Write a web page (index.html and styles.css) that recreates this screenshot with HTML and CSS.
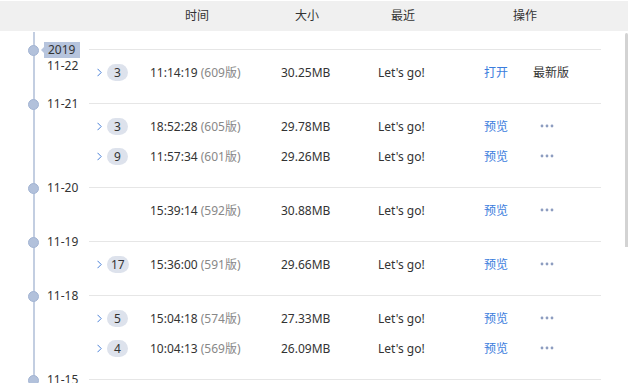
FILE: index.html
```html
<!DOCTYPE html>
<html lang="zh-CN">
<head>
  <meta charset="UTF-8">
  <meta name="viewport" content="width=device-width, initial-scale=1.0">
  <title>历史版本</title>
  <link rel="stylesheet" href="styles.css">
</head>
<body>
  <div class="panel">
    <div class="head">
      <span></span>
      <span>时间</span>
      <span>大小</span>
      <span>最近</span>
      <span>操作</span>
    </div>

    <div class="list">
      <div class="scroll-thumb"></div>

      <div class="group">
        <span class="dot"></span>
        <div class="date">
          <span class="year">2019</span>
          <span>11-22</span>
        </div>
        <div class="rows">
          <div class="row">
            <div class="expand"><svg class="chev" width="5" height="9" viewBox="0 0 5 9"><path d="M0.5 0.8 L4.2 4.5 L0.5 8.2" fill="none" stroke="#4a80d8" stroke-width="1"/></svg><span class="badge">3</span></div>
            <div>11:14:19 <span class="ver">(609版)</span></div>
            <div>30.25MB</div>
            <div>Let's go!</div>
            <div class="link">打开</div>
            <div>最新版</div>
          </div>
        </div>
      </div>

      <div class="group">
        <span class="dot"></span>
        <div class="date"><span>11-21</span></div>
        <div class="rows">
          <div class="row">
            <div class="expand"><svg class="chev" width="5" height="9" viewBox="0 0 5 9"><path d="M0.5 0.8 L4.2 4.5 L0.5 8.2" fill="none" stroke="#4a80d8" stroke-width="1"/></svg><span class="badge">3</span></div>
            <div>18:52:28 <span class="ver">(605版)</span></div>
            <div>29.78MB</div>
            <div>Let's go!</div>
            <div class="link">预览</div>
            <div><svg class="more" width="14" height="4" viewBox="0 0 14 4"><circle cx="2" cy="2" r="1.4"/><circle cx="7" cy="2" r="1.4"/><circle cx="12" cy="2" r="1.4"/></svg></div>
          </div>
          <div class="row">
            <div class="expand"><svg class="chev" width="5" height="9" viewBox="0 0 5 9"><path d="M0.5 0.8 L4.2 4.5 L0.5 8.2" fill="none" stroke="#4a80d8" stroke-width="1"/></svg><span class="badge">9</span></div>
            <div>11:57:34 <span class="ver">(601版)</span></div>
            <div>29.26MB</div>
            <div>Let's go!</div>
            <div class="link">预览</div>
            <div><svg class="more" width="14" height="4" viewBox="0 0 14 4"><circle cx="2" cy="2" r="1.4"/><circle cx="7" cy="2" r="1.4"/><circle cx="12" cy="2" r="1.4"/></svg></div>
          </div>
        </div>
      </div>

      <div class="group">
        <span class="dot"></span>
        <div class="date"><span>11-20</span></div>
        <div class="rows">
          <div class="row">
            <div class="expand"></div>
            <div>15:39:14 <span class="ver">(592版)</span></div>
            <div>30.88MB</div>
            <div>Let's go!</div>
            <div class="link">预览</div>
            <div><svg class="more" width="14" height="4" viewBox="0 0 14 4"><circle cx="2" cy="2" r="1.4"/><circle cx="7" cy="2" r="1.4"/><circle cx="12" cy="2" r="1.4"/></svg></div>
          </div>
        </div>
      </div>

      <div class="group">
        <span class="dot"></span>
        <div class="date"><span>11-19</span></div>
        <div class="rows">
          <div class="row">
            <div class="expand"><svg class="chev" width="5" height="9" viewBox="0 0 5 9"><path d="M0.5 0.8 L4.2 4.5 L0.5 8.2" fill="none" stroke="#4a80d8" stroke-width="1"/></svg><span class="badge">17</span></div>
            <div>15:36:00 <span class="ver">(591版)</span></div>
            <div>29.66MB</div>
            <div>Let's go!</div>
            <div class="link">预览</div>
            <div><svg class="more" width="14" height="4" viewBox="0 0 14 4"><circle cx="2" cy="2" r="1.4"/><circle cx="7" cy="2" r="1.4"/><circle cx="12" cy="2" r="1.4"/></svg></div>
          </div>
        </div>
      </div>

      <div class="group">
        <span class="dot"></span>
        <div class="date"><span>11-18</span></div>
        <div class="rows">
          <div class="row">
            <div class="expand"><svg class="chev" width="5" height="9" viewBox="0 0 5 9"><path d="M0.5 0.8 L4.2 4.5 L0.5 8.2" fill="none" stroke="#4a80d8" stroke-width="1"/></svg><span class="badge">5</span></div>
            <div>15:04:18 <span class="ver">(574版)</span></div>
            <div>27.33MB</div>
            <div>Let's go!</div>
            <div class="link">预览</div>
            <div><svg class="more" width="14" height="4" viewBox="0 0 14 4"><circle cx="2" cy="2" r="1.4"/><circle cx="7" cy="2" r="1.4"/><circle cx="12" cy="2" r="1.4"/></svg></div>
          </div>
          <div class="row">
            <div class="expand"><svg class="chev" width="5" height="9" viewBox="0 0 5 9"><path d="M0.5 0.8 L4.2 4.5 L0.5 8.2" fill="none" stroke="#4a80d8" stroke-width="1"/></svg><span class="badge">4</span></div>
            <div>10:04:13 <span class="ver">(569版)</span></div>
            <div>26.09MB</div>
            <div>Let's go!</div>
            <div class="link">预览</div>
            <div><svg class="more" width="14" height="4" viewBox="0 0 14 4"><circle cx="2" cy="2" r="1.4"/><circle cx="7" cy="2" r="1.4"/><circle cx="12" cy="2" r="1.4"/></svg></div>
          </div>
        </div>
      </div>

      <div class="group">
        <span class="dot"></span>
        <div class="date"><span>11-15</span></div>
        <div class="rows"></div>
      </div>
    </div>
  </div>
</body>
</html>
```

FILE: styles.css
```css
body {
  margin: 0;
  font-family: "Noto Sans", "Noto Sans CJK SC", sans-serif;
  font-size: 12px;
  color: #333;
  background: #fff;
}
.panel {
  width: 628px;
  height: 383px;
  overflow: hidden;
}
.head {
  margin-top: 1px;
  height: 30px;
  background-color: #f0f0f0;
  display: grid;
  grid-template-columns: 185px 110px 96px 122px auto;
  align-items: center;
  line-height: 16px;
}
.list {
  position: relative;
  padding-top: 18px;
  padding-right: 27px;
}
.list::before {
  content: "";
  position: absolute;
  left: 33px;
  top: 1px;
  bottom: 0;
  width: 2px;
  background-color: #c3cee1;
}
.scroll-thumb {
  position: absolute;
  right: 0;
  top: 2px;
  width: 3px;
  height: 214px;
  background-color: #d3d3d3;
  border-radius: 2px 2px 0 0;
}
.group {
  position: relative;
  display: grid;
  grid-template-columns: 89px 1fr;
}
.dot {
  position: absolute;
  left: 28px;
  top: -4px;
  width: 9px;
  height: 9px;
  border-radius: 50%;
  background-color: #b2c1db;
  border: 1px solid #a2b4d3;
}
.date {
  margin-top: -7px;
  padding-left: 47px;
  display: flex;
  flex-direction: column;
  align-items: flex-start;
  line-height: 16px;
}
.year {
  position: relative;
  margin-left: -3px;
  padding: 0 5px 0 4px;
  background-color: #b6c4dd;
}
.year::before {
  content: "";
  position: absolute;
  left: -3px;
  top: 5px;
  border-top: 3px solid transparent;
  border-bottom: 3px solid transparent;
  border-right: 3px solid #b6c4dd;
}
.rows {
  border-top: 1px solid #e6e6e6;
  padding: 7px 0 16px;
}
.row {
  height: 30px;
  display: grid;
  grid-template-columns: 61px 131px 97px 106px 49px 1fr;
  align-items: center;
  white-space: nowrap;
}
.expand {
  display: flex;
  align-items: center;
  padding-left: 8px;
  gap: 5px;
}
.badge {
  min-width: 21px;
  height: 17px;
  line-height: 17px;
  border-radius: 9px;
  background-color: #dde2ec;
  text-align: center;
  box-sizing: border-box;
  padding: 0 4px;
}
.ver {
  color: #888;
}
.link {
  color: #3b7ddd;
}
.more {
  display: block;
  margin-left: 7px;
  fill: #8d9dc0;
}
```
